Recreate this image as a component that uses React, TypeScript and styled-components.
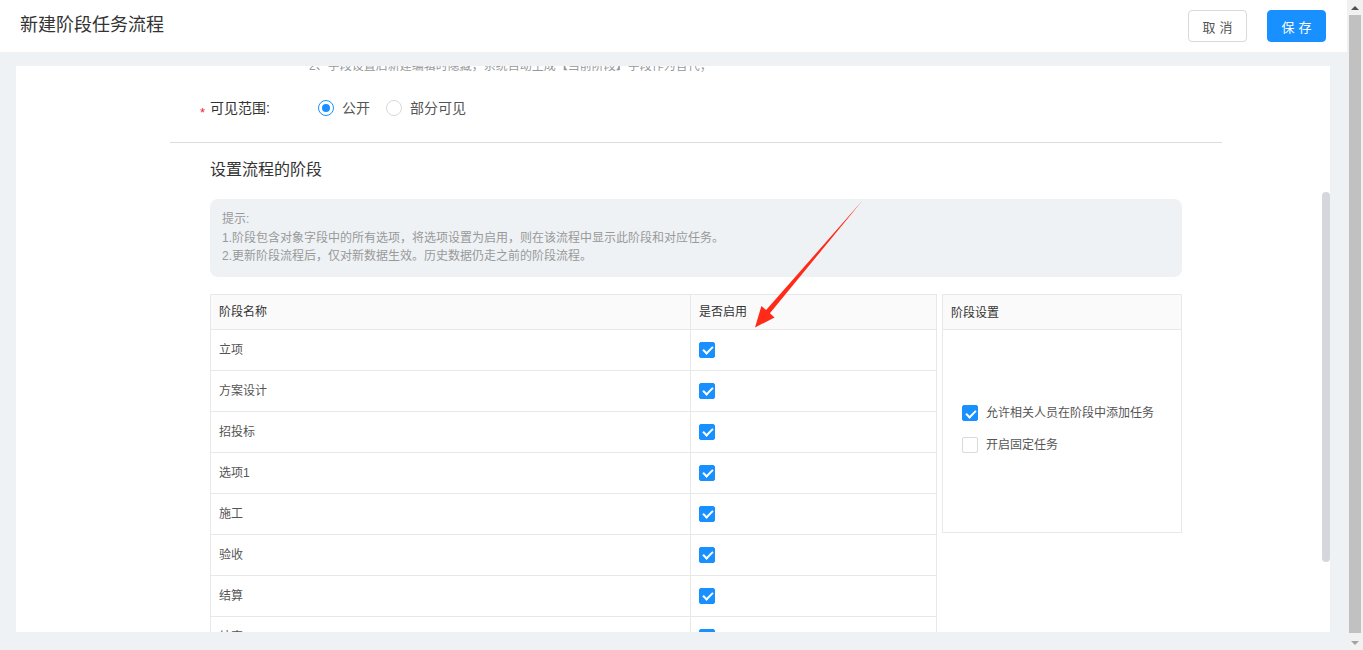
import React from 'react';
import styled, { createGlobalStyle } from 'styled-components';

const GlobalStyle = createGlobalStyle`
  html, body {
    margin: 0;
    padding: 0;
  }
  body {
    font-family: 'Liberation Sans', 'Noto Sans CJK SC', sans-serif;
    color: #333;
  }
`;

const Page = styled.div`
  position: relative;
  display: flex;
  width: 1363px;
  height: 650px;
  overflow: hidden;
`;

const Main = styled.div`
  flex: 1;
  min-width: 0;
  display: flex;
  flex-direction: column;
`;

const Header = styled.header`
  height: 52px;
  flex-shrink: 0;
  box-sizing: border-box;
  display: flex;
  align-items: center;
  justify-content: space-between;
  padding: 0 21px 0 20px;
  background: #fff;
`;

const Title = styled.h1`
  margin: 0 0 2px;
  font-size: 18px;
  font-weight: 400;
  line-height: 24px;
  color: #333;
`;

const Actions = styled.div`
  display: flex;
  gap: 20px;
`;

const Button = styled.button<{ $primary?: boolean }>`
  width: 59px;
  height: 32px;
  padding: 0 0 0 4px;
  box-sizing: border-box;
  font-family: inherit;
  font-size: 13px;
  letter-spacing: 4px;
  border-radius: 4px;
  border: 1px solid ${(p) => (p.$primary ? '#1890ff' : '#d9d9d9')};
  background: ${(p) => (p.$primary ? '#1890ff' : '#fff')};
  color: ${(p) => (p.$primary ? '#fff' : '#555')};
`;

const Body = styled.div`
  flex: 1;
  min-height: 0;
  display: flex;
  padding: 14px 17px 18px 16px;
  background: #eef2f5;
`;

const Card = styled.div`
  flex: 1;
  position: relative;
  overflow: hidden;
  background: #fff;
`;

const Content = styled.div`
  width: 1052px;
  margin: -9px 0 0 154px;
`;

const FormArea = styled.div`
  padding: 0 40px;
`;

const Hint = styled.div`
  margin-left: 99px;
  font-size: 12px;
  line-height: 18px;
  color: #999;
`;

const FormRow = styled.div`
  display: flex;
  align-items: center;
  height: 32px;
  margin: 17px 0 0 -10px;
`;

const Asterisk = styled.span`
  width: 10px;
  margin-top: 10px;
  font-size: 13px;
  line-height: 14px;
  color: #f5222d;
`;

const Label = styled.span`
  width: 108px;
  font-size: 14px;
  line-height: 20px;
  color: #333;
`;

const RadioOption = styled.label`
  display: flex;
  align-items: center;
  gap: 8px;
  margin-right: 16px;
  font-size: 14px;
  line-height: 20px;
  color: #555;
`;

const RadioDot = styled.span<{ $checked?: boolean }>`
  position: relative;
  width: 16px;
  height: 16px;
  box-sizing: border-box;
  border-radius: 50%;
  border: 1px solid ${(p) => (p.$checked ? '#1890ff' : '#d9d9d9')};
  background: #fff;

  &::after {
    content: '';
    display: ${(p) => (p.$checked ? 'block' : 'none')};
    position: absolute;
    left: 3px;
    top: 3px;
    width: 8px;
    height: 8px;
    border-radius: 50%;
    background: #1890ff;
  }
`;

const Divider = styled.div`
  height: 1px;
  margin-top: 18px;
  background: #dcdcdc;
`;

const Section = styled.div`
  padding: 0 40px;
`;

const SectionTitle = styled.h2`
  margin: 15px 0 0;
  font-size: 16px;
  font-weight: 400;
  line-height: 24px;
  color: #333;
`;

const Tip = styled.div`
  margin-top: 17px;
  padding: 11px 12px 11px;
  border-radius: 8px;
  background: #eef2f5;
  font-size: 12px;
  line-height: 18.5px;
  color: #999;
`;

const Grid = styled.div`
  display: flex;
  align-items: flex-start;
  gap: 5px;
  margin-top: 17px;
`;

const StageTable = styled.div`
  display: grid;
  grid-template-columns: 480px 1fr;
  width: 727px;
  box-sizing: border-box;
  border-top: 1px solid #e8e8e8;
  border-left: 1px solid #e8e8e8;
`;

const Cell = styled.div<{ $head?: boolean }>`
  height: ${(p) => (p.$head ? 35 : 41)}px;
  box-sizing: border-box;
  display: flex;
  align-items: center;
  padding: 0 8px;
  border-right: 1px solid #e8e8e8;
  border-bottom: 1px solid #e8e8e8;
  background: ${(p) => (p.$head ? '#fafafa' : '#fff')};
  font-size: 12px;
  line-height: 18px;
  color: ${(p) => (p.$head ? '#333' : '#555')};
`;

const Panel = styled.div`
  width: 240px;
  height: 239px;
  box-sizing: border-box;
  border: 1px solid #e8e8e8;
  display: flex;
  flex-direction: column;
`;

const PanelHead = styled.div`
  height: 35px;
  box-sizing: border-box;
  display: flex;
  align-items: center;
  padding: 0 8px;
  border-bottom: 1px solid #e8e8e8;
  background: #fafafa;
  font-size: 12px;
  color: #333;
`;

const PanelBody = styled.div`
  flex: 1;
  display: flex;
  flex-direction: column;
  justify-content: center;
  gap: 10px;
  padding: 0 19px 3px;
`;

const CheckItem = styled.label`
  display: flex;
  align-items: center;
  gap: 8px;
  font-size: 12px;
  line-height: 22px;
  color: #555;
  white-space: nowrap;
`;

const Checkbox = styled.span<{ $checked?: boolean }>`
  position: relative;
  flex-shrink: 0;
  width: 16px;
  height: 16px;
  box-sizing: border-box;
  border-radius: 2px;
  border: 1px solid ${(p) => (p.$checked ? '#1890ff' : '#d9d9d9')};
  background: ${(p) => (p.$checked ? '#1890ff' : '#fff')};

  &::after {
    content: '';
    display: ${(p) => (p.$checked ? 'block' : 'none')};
    position: absolute;
    left: 4.5px;
    top: 1.5px;
    width: 4px;
    height: 8px;
    border: solid #fff;
    border-width: 0 2px 2px 0;
    transform: rotate(45deg);
  }
`;

const InnerThumb = styled.div`
  position: absolute;
  right: 0;
  top: 126px;
  width: 8px;
  height: 370px;
  border-radius: 4px;
  background: #d4d7db;
`;

const WindowScroll = styled.div`
  width: 16px;
  flex-shrink: 0;
  display: flex;
  flex-direction: column;
  align-items: center;
  background: #f1f1f1;
`;

const ScrollArrow = styled.div<{ $down?: boolean }>`
  height: 15px;
  display: flex;
  align-items: center;
  justify-content: center;

  &::before {
    content: '';
    border-left: 4px solid transparent;
    border-right: 4px solid transparent;
    ${(p) =>
      p.$down
        ? 'border-top: 4px solid #a3a3a3;'
        : 'border-bottom: 4px solid #505050;'}
  }
`;

const ScrollThumb = styled.div`
  flex: 1;
  width: 12px;
  margin: 0 0 2px;
  background: #c1c1c1;
`;

const Annotation = styled.svg`
  position: absolute;
  left: 0;
  top: 0;
  pointer-events: none;
`;

const stages = ['立项', '方案设计', '招投标', '选项1', '施工', '验收', '结算', '结束'];

const App: React.FC = () => {
  return (
    <Page>
      <GlobalStyle />
      <Main>
        <Header>
          <Title>新建阶段任务流程</Title>
          <Actions>
            <Button>取消</Button>
            <Button $primary>保存</Button>
          </Actions>
        </Header>
        <Body>
          <Card>
            <Content>
              <FormArea>
                <Hint>2、字段设置后新建编辑时隐藏，系统自动生成【当前阶段】字段作为替代；</Hint>
                <FormRow>
                  <Asterisk>*</Asterisk>
                  <Label>可见范围:</Label>
                  <RadioOption>
                    <RadioDot $checked />
                    公开
                  </RadioOption>
                  <RadioOption>
                    <RadioDot />
                    部分可见
                  </RadioOption>
                </FormRow>
              </FormArea>
              <Divider />
              <Section>
                <SectionTitle>设置流程的阶段</SectionTitle>
                <Tip>
                  <div>提示:</div>
                  <div>1.阶段包含对象字段中的所有选项，将选项设置为启用，则在该流程中显示此阶段和对应任务。</div>
                  <div>2.更新阶段流程后，仅对新数据生效。历史数据仍走之前的阶段流程。</div>
                </Tip>
                <Grid>
                  <StageTable>
                    <Cell $head>阶段名称</Cell>
                    <Cell $head>是否启用</Cell>
                    {stages.map((name) => (
                      <React.Fragment key={name}>
                        <Cell>{name}</Cell>
                        <Cell>
                          <Checkbox $checked />
                        </Cell>
                      </React.Fragment>
                    ))}
                  </StageTable>
                  <Panel>
                    <PanelHead>阶段设置</PanelHead>
                    <PanelBody>
                      <CheckItem>
                        <Checkbox $checked />
                        允许相关人员在阶段中添加任务
                      </CheckItem>
                      <CheckItem>
                        <Checkbox />
                        开启固定任务
                      </CheckItem>
                    </PanelBody>
                  </Panel>
                </Grid>
              </Section>
            </Content>
            <InnerThumb />
          </Card>
        </Body>
      </Main>
      <WindowScroll>
        <ScrollArrow />
        <ScrollThumb />
        <ScrollArrow $down />
      </WindowScroll>
      <Annotation width="1363" height="650" viewBox="0 0 1363 650">
        <polygon
          points="862.5,200.5 769.9,313.3 774.6,317.4 755,327.5 761.4,306.1 766.1,310.1"
          fill="#ff2a17"
        />
      </Annotation>
    </Page>
  );
};

export default App;
